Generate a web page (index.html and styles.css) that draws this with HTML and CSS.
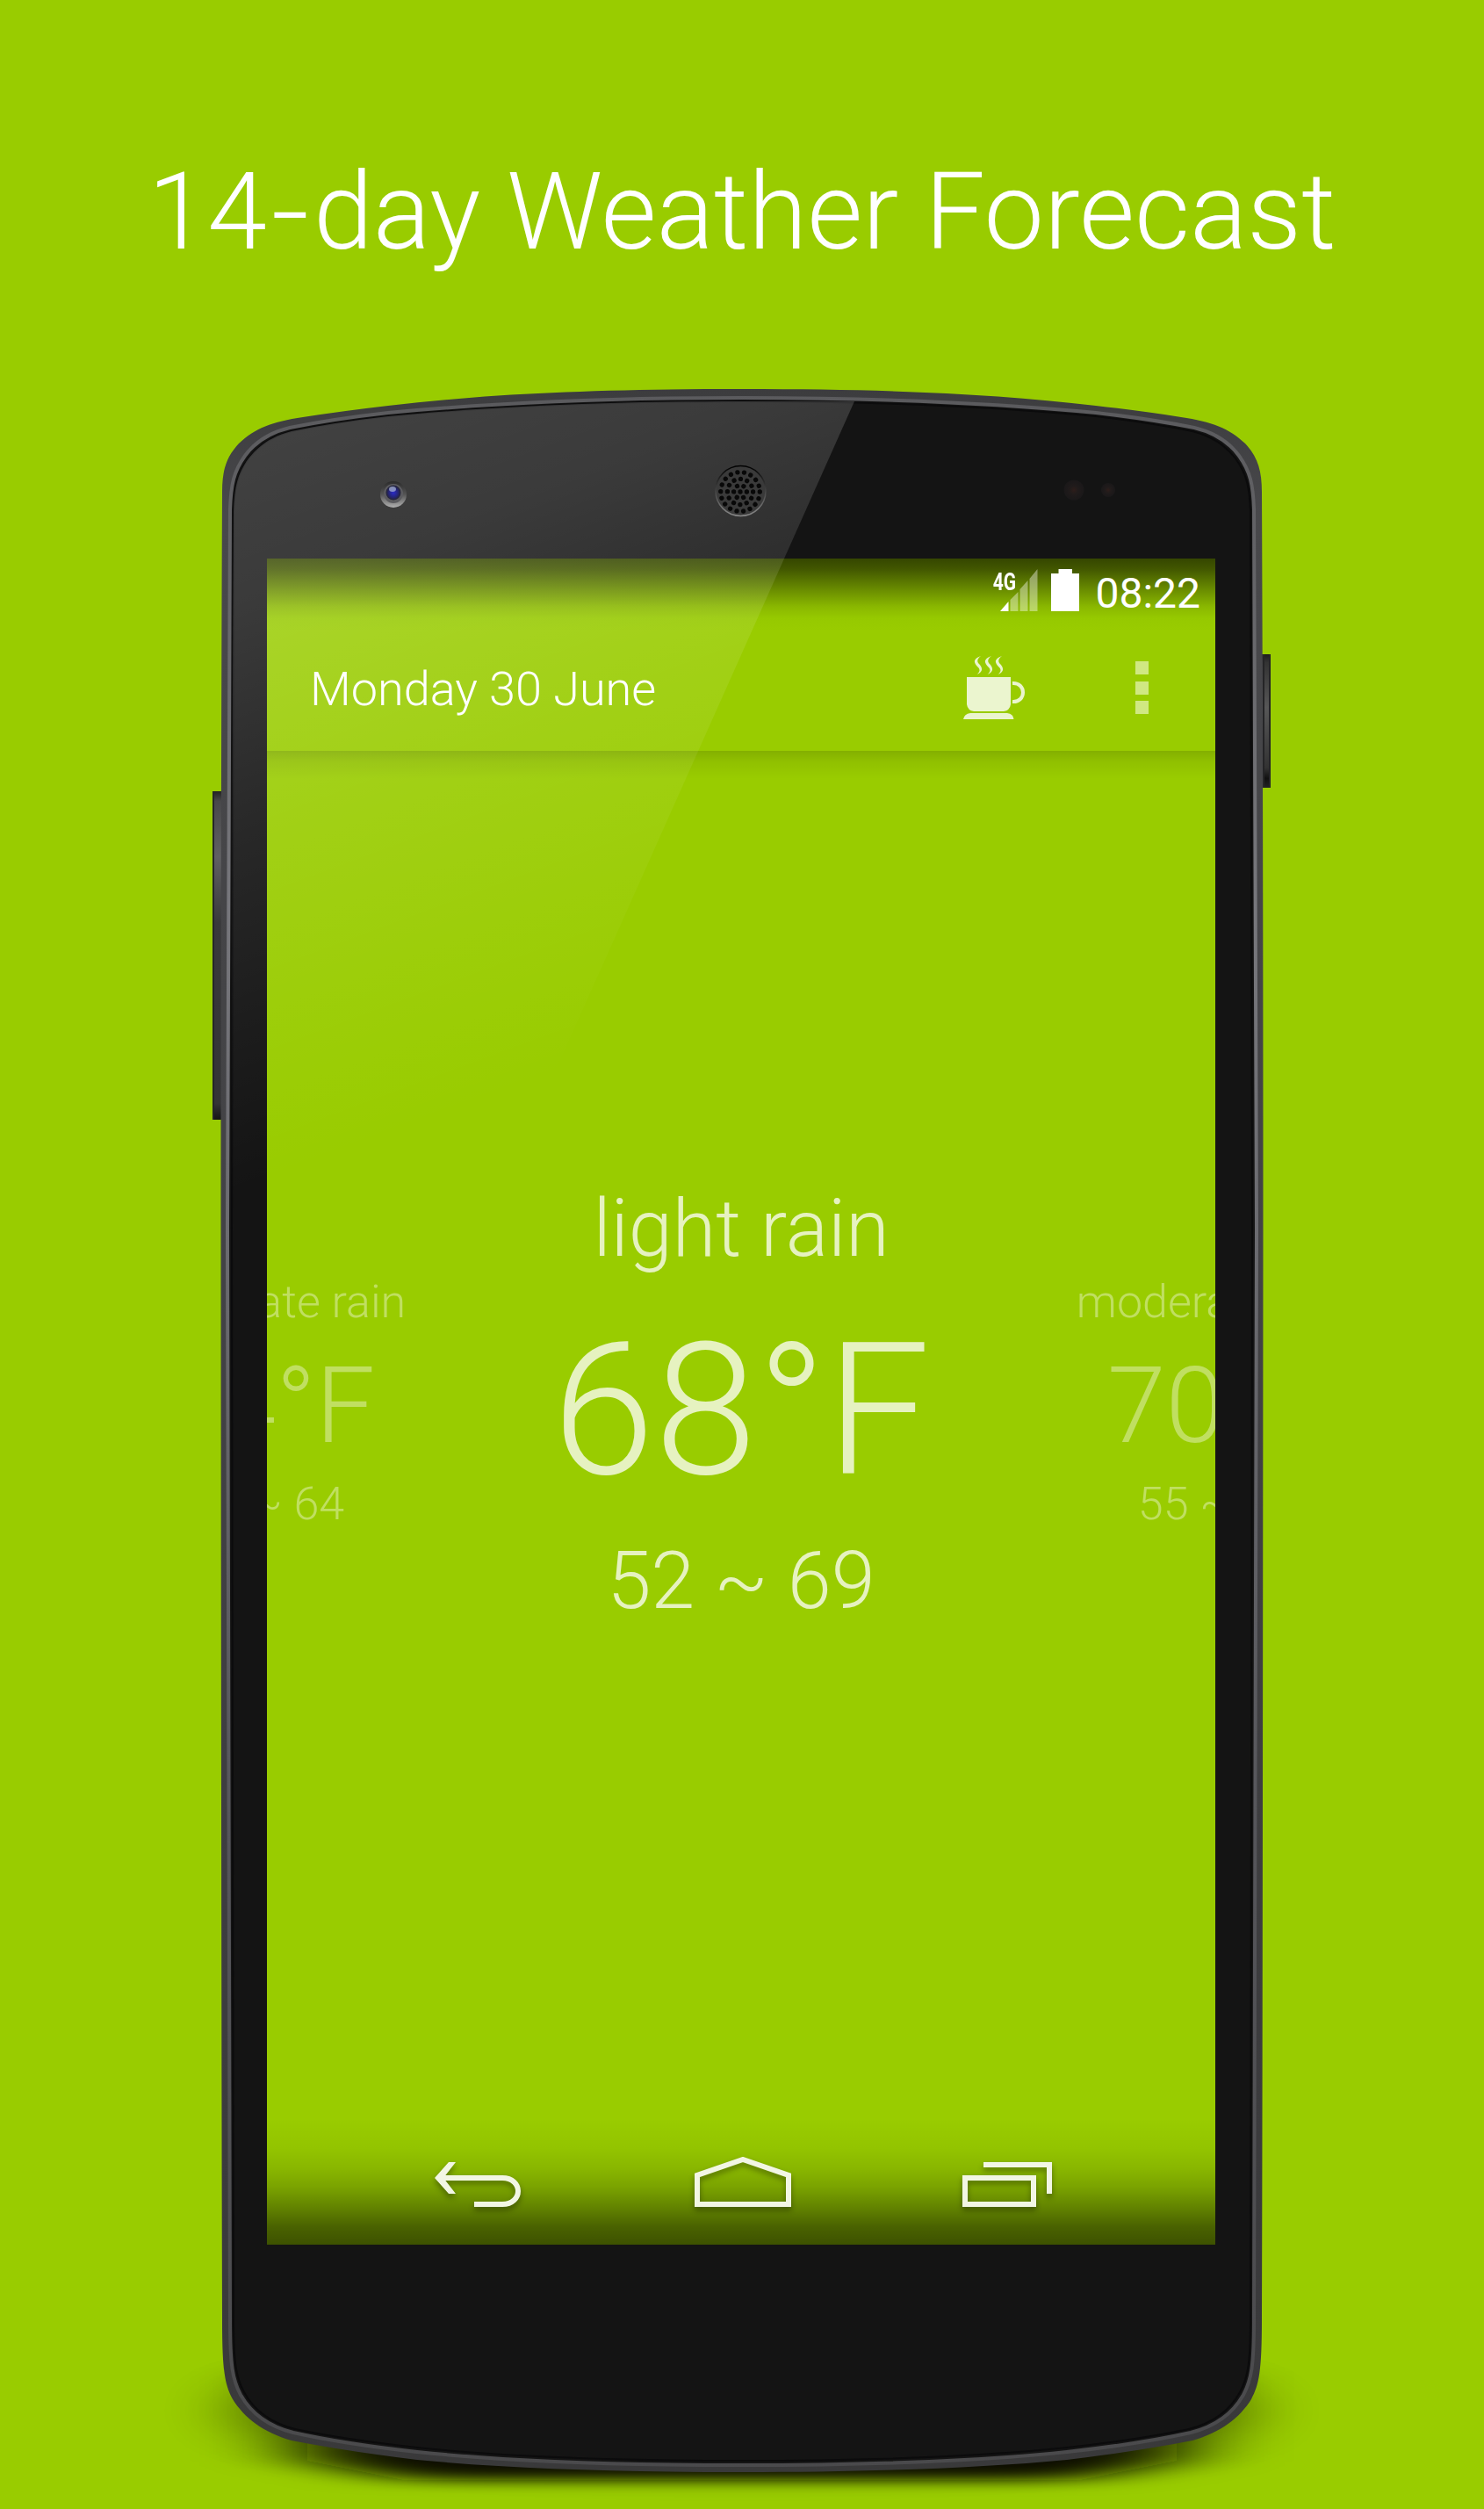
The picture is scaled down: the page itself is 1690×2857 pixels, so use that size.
FILE: index.html
```html
<!DOCTYPE html>
<html lang="en">
<head>
<meta charset="utf-8">
<title>14-day Weather Forecast</title>
<link rel="stylesheet" href="styles.css">
</head>
<body>
<main class="promo">
  <h1 class="headline">14<span class="hyphen">-</span>day Weather Forecast</h1>
  <section class="phone">
    <svg class="chassis" viewBox="0 400 1690 2457" aria-hidden="true">
      <defs>
        <linearGradient id="rim" x1="0" y1="0" x2="0" y2="1">
          <stop offset="0" stop-color="#3c3c3e"/><stop offset=".06" stop-color="#48484b"/><stop offset=".9" stop-color="#3a3a3c"/><stop offset="1" stop-color="#39393a"/>
        </linearGradient>
        <linearGradient id="rimLight" x1="0" y1="443" x2="0" y2="2815" gradientUnits="userSpaceOnUse">
          <stop offset="0" stop-color="#5a5a5d"/><stop offset=".25" stop-color="#77777c"/><stop offset=".7" stop-color="#55555a"/><stop offset="1" stop-color="#4a4a4c"/>
        </linearGradient>
        <linearGradient id="keyLeft" x1="0" y1="0" x2="0" y2="1">
          <stop offset="0" stop-color="#222"/><stop offset=".03" stop-color="#48484a"/><stop offset=".2" stop-color="#606062"/><stop offset=".4" stop-color="#39393b"/><stop offset=".95" stop-color="#343436"/><stop offset="1" stop-color="#151515"/>
        </linearGradient>
        <linearGradient id="keyRight" x1="0" y1="0" x2="0" y2="1">
          <stop offset="0" stop-color="#1c1c1e"/><stop offset=".06" stop-color="#333"/><stop offset=".4" stop-color="#575757"/><stop offset=".85" stop-color="#333"/><stop offset=".93" stop-color="#111"/><stop offset="1" stop-color="#222"/>
        </linearGradient>
        <filter id="blurWide" x="-20%" y="-100%" width="140%" height="300%"><feGaussianBlur stdDeviation="30 20"/></filter>
        <filter id="blurTight" x="-25%" y="-80%" width="150%" height="260%"><feGaussianBlur stdDeviation="56 8"/></filter>
      </defs>
      <ellipse cx="845" cy="2745" rx="610" ry="64" fill="#000" opacity=".24" filter="url(#blurWide)"/>
      <path d="M350 2700H1340V2802L1230 2824H460L350 2802Z" fill="#0a1000" filter="url(#blurTight)"/>
      <rect x="242" y="901" width="14" height="374" fill="url(#keyLeft)"/>
      <path d="M243 901V1275" stroke="#252527" stroke-width="2"/>
      <rect x="1434" y="745" width="13" height="152" fill="url(#keyRight)"/>
      <path d="M1446 745V897M1439 745V897" stroke="#252527" stroke-width="2"/>
      <path id="body" fill="url(#rim)" d="M845 443C680 443 560 448 442 462Q390 468 345 475C310 480 290 488 272 505C258 520 253 535 253 560Q251.500 900 251.500 1400Q252 2300 253 2640C253 2700 256 2715 265 2732C278 2753 300 2770 332 2779Q393 2791 475 2801C580 2811 710 2815 845 2815S1110 2811 1215 2801Q1297 2791 1358 2779C1390 2770 1412 2753 1425 2732C1434 2715 1437 2700 1437 2640Q1438 2300 1438.500 1400Q1438.500 900 1437 560C1437 535 1432 520 1418 505C1400 488 1380 480 1345 475Q1300 468 1248 462C1130 448 1010 443 845 443Z"/>
      <path fill="#141414" stroke="url(#rimLight)" stroke-width="4" d="M845 453C690 453 560 459 442 470Q380 477 330 487C305 493 290 504 279 519C266 537 263 552 262 580Q259 900 259 1400Q260 2300 262 2640C262 2695 265 2710 274 2727C286 2748 306 2763 334 2770Q393 2783 475 2792C580 2803 710 2807 845 2807S1110 2803 1215 2792Q1297 2783 1356 2770C1384 2763 1404 2748 1416 2727C1425 2710 1428 2695 1428 2640Q1430 2300 1431 1400Q1431 900 1428 580C1427 552 1424 537 1411 519C1400 504 1385 493 1360 487Q1310 477 1248 470C1130 459 1000 453 845 453Z"/>
      <path fill="#141414" stroke="#0b0b0c" stroke-width="2" d="M845 457C690 457 560 463 442 474Q380 481 332 491C309 497 295 507 283 522C270 540 267 555 266 582Q264 900 264 1400Q264 2300 266 2640C266 2692 269 2708 278 2724C289 2744 308 2759 336 2766Q393 2778 475 2787C580 2798 710 2802 845 2802S1110 2798 1215 2787Q1297 2778 1354 2766C1382 2759 1401 2744 1412 2724C1421 2708 1424 2692 1424 2640Q1426 2300 1426 1400Q1426 900 1424 582C1423 555 1420 540 1407 522C1395 507 1381 497 1358 491Q1310 481 1248 474C1130 463 1000 457 845 457Z"/>
    </svg>

    <div class="screen">
      <div class="status-bar">
        <svg class="signal" viewBox="0 0 52 48" aria-hidden="true">
          <path fill="#fff" d="M1 48H10.500V37Z"/>
          <path fill="#fff" opacity=".4" d="M12.500 48V35L21.500 26V48ZM23.500 48V23L32.500 13V48ZM34.500 48V11L43.500 0V48Z"/>
        </svg>
        <span class="network">4G</span>
        <svg class="battery" viewBox="0 0 32 48" aria-hidden="true"><path fill="#fff" d="M8.500 0H24V5H32V48H0V5H8.500Z"/></svg>
        <span class="clock">08:22</span>
      </div>
      <div class="action-bar">
        <span class="date">Monday 30 June</span>
        <svg class="cup" viewBox="0 0 72 74" aria-hidden="true">
          <g fill="#ebf5cf">
            <path d="M4 25H54V56Q53 63 46 64H12Q5 63 4 56Z"/>
            <path d="M0 73Q1 67 8 66H50Q57 67 57.500 73Z"/>
            <path id="steam" d="M20 1C10 5 12 9 17 14C20 17 18 20 15.500 22C23 19 22 14 18 10C15 7 16 4 20 1Z"/>
            <use href="#steam" x="12"/><use href="#steam" x="24"/>
          </g>
          <path d="M56 32C72 31 72 54 56 53" fill="none" stroke="#ebf5cf" stroke-width="4"/>
        </svg>
        <span class="overflow"><i></i><i></i><i></i></span>
      </div>
      <div class="pager">
        <article class="day">
          <p class="sky">moderate rain</p><p class="temp">64°F</p><p class="range">54 ~ 64</p>
        </article>
        <article class="day current">
          <p class="sky">light rain</p><p class="temp">68°F</p><p class="range">52 ~ 69</p>
        </article>
        <article class="day">
          <p class="sky">moderate rain</p><p class="temp">70°F</p><p class="range">55 ~ 71</p>
        </article>
      </div>
      <div class="nav-bar">
        <svg viewBox="0 0 102 64" aria-hidden="true"><path d="M6 24H78C102 24 102 54 78 54H46"/><path class="tip" d="M17 6H25L11 24L25 42H17L1 24Z"/></svg>
        <svg viewBox="0 0 110 64" aria-hidden="true"><path d="M3 54V21L55 3L107 21V54Z"/></svg>
        <svg viewBox="0 0 104 64" aria-hidden="true"><path d="M3 24H81V54H3ZM24 9H99V42"/></svg>
      </div>
    </div>

    <svg class="glass" viewBox="0 400 1690 2457" aria-hidden="true">
      <defs>
        <linearGradient id="gloss" gradientUnits="userSpaceOnUse" x1="300" y1="450" x2="593" y2="1240">
          <stop offset="0" stop-color="#fff" stop-opacity=".2"/><stop offset=".25" stop-color="#fff" stop-opacity=".165"/><stop offset=".55" stop-color="#fff" stop-opacity=".085"/><stop offset=".8" stop-color="#fff" stop-opacity=".035"/><stop offset="1" stop-color="#fff" stop-opacity="0"/>
        </linearGradient>
        <linearGradient id="ring" x1="0" y1="0" x2="0" y2="1"><stop offset="0" stop-color="#2b2b2b"/><stop offset=".5" stop-color="#555"/><stop offset="1" stop-color="#b0b0b0"/></linearGradient>
        <radialGradient id="lens"><stop offset="0" stop-color="#2a2ac8"/><stop offset=".6" stop-color="#25257a"/><stop offset="1" stop-color="#252530"/></radialGradient>
        <linearGradient id="rimSpeaker" x1="0" y1="0" x2="0" y2="1"><stop offset="0" stop-color="#000"/><stop offset="1" stop-color="#888"/></linearGradient>
        <radialGradient id="sensor"><stop offset="0" stop-color="#35201c"/><stop offset=".4" stop-color="#241d1d"/><stop offset="1" stop-color="#1c1a1b"/></radialGradient>
      </defs>
      <path fill="url(#gloss)" d="M973 457L600 1292L264 1400Q264 900 266 582C267 555 270 540 283 522C295 507 309 497 332 491Q380 481 442 474C560 463 690 457 845 457Z"/>
      <circle cx="448" cy="563" r="15" fill="url(#ring)"/>
      <circle cx="448" cy="562" r="11" fill="#5c5c60"/>
      <circle cx="448" cy="561" r="8.500" fill="url(#lens)"/>
      <ellipse cx="447" cy="557" rx="4" ry="3" fill="#b9c6dd" opacity=".65"/>
      <circle cx="843.500" cy="559" r="28.500" fill="#3a3a3a" stroke="url(#rimSpeaker)" stroke-width="1.500"/>
      <g fill="none" stroke="#080808" stroke-linecap="round">
        <circle cx="843" cy="560" r="22.300" stroke-width="5.300" stroke-dasharray="0.010 7.774"/>
        <circle cx="843" cy="560" r="14.600" stroke-width="5.300" stroke-dasharray="0.010 7.634"/>
        <circle cx="843" cy="560" r="7.400" stroke-width="5.300" stroke-dasharray="0.010 7.739"/>
        <path d="M843 560h.01" stroke-width="5.300"/>
      </g>
      <g opacity=".8">
        <circle cx="1223" cy="558" r="11.500" fill="url(#sensor)"/>
        <circle cx="1262" cy="558" r="8" fill="url(#sensor)"/>
      </g>
    </svg>
  </section>
</main>
</body>
</html>
```
FILE: styles.css
```css
* { box-sizing: border-box; }
body {
  margin: 0;
  background: #99cc00;
  color: #fff;
  font-family: Roboto, "Liberation Sans", sans-serif;
  font-weight: 300;
}
p, h1 { margin: 0; }
.promo { width: 1690px; height: 2857px; overflow: hidden; }
.headline {
  height: 400px;
  padding-top: 170px;
  font-size: 122px;
  font-weight: 300;
  line-height: 143px;
  text-align: center;
  white-space: nowrap;
}
.hyphen { display: inline-block; margin: 0 9px; transform: scaleX(1.25); }
.phone { position: relative; height: 2457px; padding: 236px 0 0 304px; }
.chassis, .glass { position: absolute; inset: 0; width: 1690px; height: 2457px; }
.screen {
  position: relative;
  display: flex;
  flex-direction: column;
  width: 1080px;
  height: 1920px;
  overflow: hidden;
  background:
    linear-gradient(#354600 0, #425700 12px, #678900 34px, #8ab800 55px, #96c900 68px, rgba(153, 204, 0, 0) 82px),
    linear-gradient(rgba(0, 0, 0, 0) 1776px, rgba(0, 0, 0, .04) 1810px, rgba(0, 0, 0, .11) 1834px, rgba(0, 0, 0, .2) 1854px, rgba(0, 0, 0, .37) 1879px, rgba(0, 0, 0, .52) 1900px, rgba(0, 0, 0, .6) 1920px),
    #99cc00;
}
.status-bar {
  display: flex;
  align-items: center;
  height: 75px;
  padding: 0 17px 0 0;
  justify-content: flex-end;
}
.network {
  order: -1;
  margin: -22px -19px 0 0;
  font-size: 28px;
  font-weight: 700;
  line-height: 30px;
  transform: scaleX(.75);
  transform-origin: right;
}
.signal { width: 52px; height: 48px; margin-top: -3px; }
.battery { width: 32px; height: 48px; margin: -3px 18px 0 7px; }
.clock { font-size: 48px; font-weight: 400; line-height: 60px; margin-top: 4px; }
.action-bar {
  display: flex;
  align-items: center;
  height: 144px;
  padding: 0 76px 0 49px;
}
.date { flex: 1; margin-top: 4px; font-size: 54px; line-height: 64px; }
.cup { width: 72px; height: 74px; margin-right: 124px; }
.overflow { display: flex; flex-direction: column; gap: 7.500px; }
.overflow i { width: 15px; height: 15px; background: #d0e882; }
.pager {
  display: flex;
  justify-content: center;
  align-items: flex-start;
  flex: 1;
  background: linear-gradient(rgba(0, 0, 0, .14), rgba(0, 0, 0, .06) 12px, rgba(0, 0, 0, 0) 32px);
}
.day {
  flex: 0 0 540px;
  display: flex;
  flex-direction: column;
  align-items: center;
  padding-top: 597px;
  color: rgba(255, 255, 255, .38);
  white-space: nowrap;
}
.sky, .range { font-size: 52px; line-height: 61px; }
.temp { font-size: 120px; line-height: 141px; margin: 18px 0 10px; }
.current { padding-top: 492px; color: #e6f2c0; }
.current .sky, .current .range { font-size: 90px; line-height: 105px; }
.current .temp { font-size: 210px; line-height: 246px; margin: 31px 0 19px; }
.nav-bar {
  display: flex;
  align-items: flex-start;
  justify-content: space-between;
  height: 100px;
  padding: 0 184px 0 190px;
}
.nav-bar svg {
  height: 64px;
  fill: none;
  stroke: #f2f6e4;
  stroke-width: 6;
  filter: drop-shadow(0 4px 3px rgba(0, 0, 0, .35));
}
.nav-bar .tip { fill: #f2f6e4; stroke: none; }
```
